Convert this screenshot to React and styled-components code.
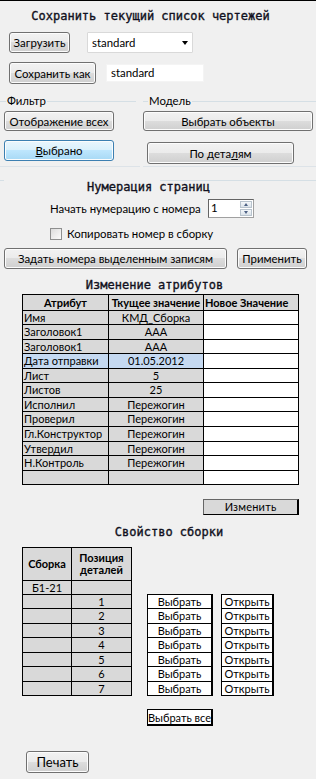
import styled, { createGlobalStyle, css } from 'styled-components'

const Global = createGlobalStyle`
  html, body {
    margin: 0;
    padding: 0;
    background: #f0f0f0;
  }
`

const Page = styled.div`
  width: 316px;
  height: 778px;
  border-top: 1px solid #000;
  background: #f0f0f0;
  font-family: Lato, "Noto Sans", sans-serif;
  font-size: 11.4px;
  color: #000;
  overflow: hidden;
`

const Heading = styled.div`
  font-family: "DejaVu Sans Mono", monospace;
  font-size: 12px;
  -webkit-text-stroke: 0.35px #101020;
  height: ${p => p.$h || 14}px;
  line-height: ${p => p.$h || 14}px;
  margin-top: ${p => p.$top}px;
  text-align: center;
  padding-left: ${p => p.$left || 0}px;
  padding-right: ${p => p.$right || 0}px;
  color: #101020;
  white-space: nowrap;
`

const Row = styled.div`
  display: flex;
  align-items: center;
  margin-top: ${p => p.$top}px;
  padding-left: ${p => p.$left || 0}px;
`

const Label = styled.span`
  width: ${p => p.$w}px;
  white-space: nowrap;
`

const winButton = css`
  box-sizing: border-box;
  font-family: Lato, "Noto Sans", sans-serif;
  color: #000;
  padding: 0;
  border: 1px solid #707070;
  border-radius: 3px;
  background: linear-gradient(#f2f2f2 0%, #ebebeb 49%, #dddddd 50%, #cfcfcf 100%);
  box-shadow: inset 0 0 0 1px #fcfcfc;
  white-space: nowrap;
  cursor: default;
`

const Button = styled.button`
  ${winButton}
  width: ${p => p.$w}px;
  height: ${p => p.$h || 21}px;
  margin-top: ${p => p.$top || 0}px;
  margin-left: ${p => p.$ml || 0}px;
  font-size: ${p => p.$fs || 11.4}px;
  ${p => p.$focused && css`
    border-color: #3c7fb1;
    background: linear-gradient(#eaf6fd 0%, #d9f0fc 49%, #bee6fd 50%, #a7d9f5 100%);
  `}
  u { text-decoration: underline; }
`

const Select = styled.div`
  box-sizing: border-box;
  width: 106px;
  height: 21px;
  margin-left: 17px;
  background: #fff;
  border: 1px solid #d9d9d9;
  border-radius: 1px;
  display: flex;
  align-items: center;
  justify-content: space-between;
  padding: 0 4px 0 4px;
`

const Arrow = styled.span`
  width: 0;
  height: 0;
  border-left: 3.5px solid transparent;
  border-right: 3.5px solid transparent;
  border-top: 4px solid #000;
`

const TextBox = styled.div`
  box-sizing: border-box;
  width: 98px;
  height: 18px;
  margin-left: 10px;
  background: #fff;
  border: 1px solid #f4f4f4;
  padding-left: 4px;
  line-height: 16px;
`

const Groups = styled.div`
  display: grid;
  grid-template-columns: 140px 1fr;
  column-gap: 3px;
  margin-top: 10px;
`

const Group = styled.div`
  display: flex;
  flex-direction: column;
  align-items: flex-start;
  padding-left: ${p => p.$pad}px;
  padding-bottom: ${p => p.$bottom}px;
  border-bottom: 1px solid #dde3e8;
`

const GroupHeader = styled.div`
  display: flex;
  align-items: center;
  height: 14px;
  width: 100%;
  margin-left: ${p => -p.$pad}px;
  &::before {
    content: "";
    width: ${p => p.$lead}px;
    border-top: 1px solid #d5dfe5;
  }
  &::after {
    content: "";
    flex: 1;
    border-top: 1px solid #d5dfe5;
  }
  span { padding: 0 1px; line-height: 14px; }
`

const NumTitle = styled(Heading)`
  position: relative;
  &::before {
    content: "";
    position: absolute;
    left: 0;
    top: 0;
    width: 4px;
    border-top: 1px solid #d5dfe5;
  }
  &::after {
    content: "";
    position: absolute;
    left: 160px;
    right: 0;
    top: 0;
    border-top: 1px solid #d5dfe5;
  }
`

const Spinner = styled.div`
  box-sizing: border-box;
  width: 46px;
  height: 19px;
  margin-left: 11px;
  background: #fff;
  border: 1px solid #a0a0a0;
  border-top-color: #646464;
  border-left-color: #646464;
  display: flex;
  justify-content: space-between;
  padding-left: 2px;
  line-height: 16px;
`

const SpinButtons = styled.div`
  width: 12px;
  display: flex;
  flex-direction: column;
  gap: 1px;
  padding: 1px 1px 1px 0;
`

const SpinBtn = styled.div`
  flex: 1;
  border: 1px solid #b8c3cd;
  background: linear-gradient(#f4f7fa, #dbe3ea);
  display: flex;
  align-items: center;
  justify-content: center;
  &::after {
    content: "";
    border-left: 2.5px solid transparent;
    border-right: 2.5px solid transparent;
    ${p => p.$down
      ? 'border-top: 3px solid #4d6185;'
      : 'border-bottom: 3px solid #4d6185;'}
  }
`

const Check = styled.span`
  box-sizing: border-box;
  width: 12px;
  height: 12px;
  border: 1px solid #8e8f8f;
  background: linear-gradient(135deg, #dcdcdc, #fbfbfb);
  margin-right: 5px;
`

const Sheet = styled.table`
  border-collapse: collapse;
  font-family: Lato, "Noto Sans", sans-serif;
  font-size: 11px;
  margin-left: 22px;
  margin-top: ${p => p.$top}px;
  table-layout: fixed;
  td, th {
    border: 1px solid #000;
    padding: 0 1px;
    white-space: nowrap;
    overflow: hidden;
    line-height: 12px;
  }
  th {
    background: #d9d9d9;
    font-weight: bold;
  }
`

const Cell = styled.td`
  background: ${p => p.$bg || '#d9d9d9'};
  text-align: ${p => p.$align || 'left'};
  height: ${p => p.$h}px;
`

const Head = styled.th`
  text-align: ${p => p.$align || 'center'};
  height: ${p => p.$h}px;
`

const FlatButton = styled.div`
  box-sizing: border-box;
  width: 96px;
  height: 16px;
  margin-left: 203px;
  margin-top: 14px;
  background: #d9d9d9;
  border: 1px solid #000;
  border-left-color: #666;
  border-top-color: #666;
  border-right-width: 2px;
  font-family: Lato, sans-serif;
  font-size: 11px;
  text-align: center;
  line-height: 14px;
  letter-spacing: 0.2px;
`

const Assembly = styled.div`
  display: flex;
  align-items: flex-start;
  margin-top: 8px;
`

const LinkColumn = styled.div`
  display: flex;
  flex-direction: column;
  margin-top: 47px;
  margin-left: ${p => p.$ml}px;
  width: ${p => p.$w}px;
`

const LinkCell = styled.div`
  box-sizing: border-box;
  height: ${p => p.$h || 15}px;
  margin-top: -1px;
  background: #fff;
  border: 1px solid #000;
  border-width: 1px 2px 1px 1px;
  font-family: Lato, sans-serif;
  font-size: 11px;
  line-height: 13px;
  text-align: center;
  &:first-child { margin-top: 0; }
`

const SelectAll = styled(LinkCell)`
  width: 66px;
  height: 17px;
  margin-left: 147px;
  margin-top: 13px;
  line-height: 15px;
  border-width: 1px 2px 2px 1px;
`

const attrs = [
  ['Имя', 'КМД_Сборка'],
  ['Заголовок1', 'ААА'],
  ['Заголовок1', 'ААА'],
  ['Дата отправки', '01.05.2012', true],
  ['Лист', '5'],
  ['Листов', '25'],
  ['Исполнил', 'Пережогин'],
  ['Проверил', 'Пережогин'],
  ['Гл.Конструктор', 'Пережогин'],
  ['Утвердил', 'Пережогин'],
  ['Н.Контроль', 'Пережогин'],
  ['', ''],
]

// row pitches in the sheets alternate 14/15px
const attrRows = [13, 14, 13, 14, 13, 14, 13, 14, 14, 13, 14, 13]
const posRows = [13, 14, 13, 14, 13, 14, 13]
const linkRows = [15, 16, 15, 16, 15, 16, 15]

const positions = [1, 2, 3, 4, 5, 6, 7]

export default function App() {
  return (
    <Page>
      <Global />
      <Heading $top={5} $h={20} $right={15}>Сохранить текущий список чертежей</Heading>

      <Row $top={6} $left={9}>
        <Button $w={61}>Загрузить</Button>
        <Select>standard<Arrow /></Select>
      </Row>
      <Row $top={9} $left={9}>
        <Button $w={87} $h={22}>Сохранить как</Button>
        <TextBox>standard</TextBox>
      </Row>

      <Groups>
        <Group $pad={4} $bottom={5}>
          <GroupHeader $pad={4} $lead={6}><span>Фильтр</span></GroupHeader>
          <Button $w={110} $h={20} $top={3}>Отображение всех</Button>
          <Button $w={110} $top={9} $focused><u>В</u>ыбрано</Button>
        </Group>
        <Group $pad={0} $bottom={1}>
          <GroupHeader $pad={0} $lead={5}><span>Модель</span></GroupHeader>
          <Button $w={170} $h={20} $top={3}>Выбрать объекты</Button>
          <Button $w={147} $h={22} $top={11} $ml={4}>По дета<u>л</u>ям</Button>
        </Group>
      </Groups>

      <NumTitle $top={13} $right={19}>Нумерация страниц</NumTitle>
      <Row $top={5} $left={50}>
        <Label $w={147}>Начать нумерацию с номера</Label>
        <Spinner>
          1
          <SpinButtons>
            <SpinBtn />
            <SpinBtn $down />
          </SpinButtons>
        </Spinner>
      </Row>
      <Row $top={9} $left={50}>
        <Check />
        <span>Копировать номер в сборку</span>
      </Row>
      <Row $top={8} $left={4}>
        <Button $w={223}>Задать номера выделенным записям</Button>
        <Button $w={70} $ml={10}>Применить</Button>
      </Row>

      <Heading $top={9} $right={7}>Изменение атрибутов</Heading>
      <Sheet $top={2}>
        <colgroup>
          <col style={{ width: 86 }} />
          <col style={{ width: 95 }} />
          <col style={{ width: 95 }} />
        </colgroup>
        <thead>
          <tr>
            <Head $h={15}>Атрибут</Head>
            <Head $h={15}>Ткущее значение</Head>
            <Head $h={15} $align="left">Новое Значение</Head>
          </tr>
        </thead>
        <tbody>
          {attrs.map(([name, value, hl], i) => (
            <tr key={i}>
              <Cell $h={attrRows[i]} $bg={hl ? '#c5d9f1' : undefined}>{name}</Cell>
              <Cell $h={attrRows[i]} $bg={hl ? '#c5d9f1' : undefined} $align="center">{value}</Cell>
              <Cell $h={attrRows[i]} $bg="#fff" />
            </tr>
          ))}
        </tbody>
      </Sheet>
      <FlatButton>Изменить</FlatButton>

      <Heading $top={10} $left={22}>Свойство сборки</Heading>
      <Assembly>
        <Sheet $top={0}>
          <colgroup>
            <col style={{ width: 49 }} />
            <col style={{ width: 60 }} />
          </colgroup>
          <thead>
            <tr>
              <Head $h={32}>Сборка</Head>
              <Head $h={32}>Позиция<br />деталей</Head>
            </tr>
          </thead>
          <tbody>
            <tr>
              <Cell $h={13} $align="center">Б1-21</Cell>
              <Cell $h={13} />
            </tr>
            {positions.map((n, i) => (
              <tr key={n}>
                <Cell $h={posRows[i]} />
                <Cell $h={posRows[i]} $align="center">{n}</Cell>
              </tr>
            ))}
          </tbody>
        </Sheet>
        <LinkColumn $ml={15} $w={66}>
          {positions.map((n, i) => <LinkCell key={n} $h={linkRows[i]}>Выбрать</LinkCell>)}
        </LinkColumn>
        <LinkColumn $ml={8} $w={53}>
          {positions.map((n, i) => <LinkCell key={n} $h={linkRows[i]}>Открыть</LinkCell>)}
        </LinkColumn>
      </Assembly>
      <SelectAll>Выбрать все</SelectAll>

      <Row $top={25} $left={26}>
        <Button $w={63} $h={22} $fs={13}>Печать</Button>
      </Row>
    </Page>
  )
}
